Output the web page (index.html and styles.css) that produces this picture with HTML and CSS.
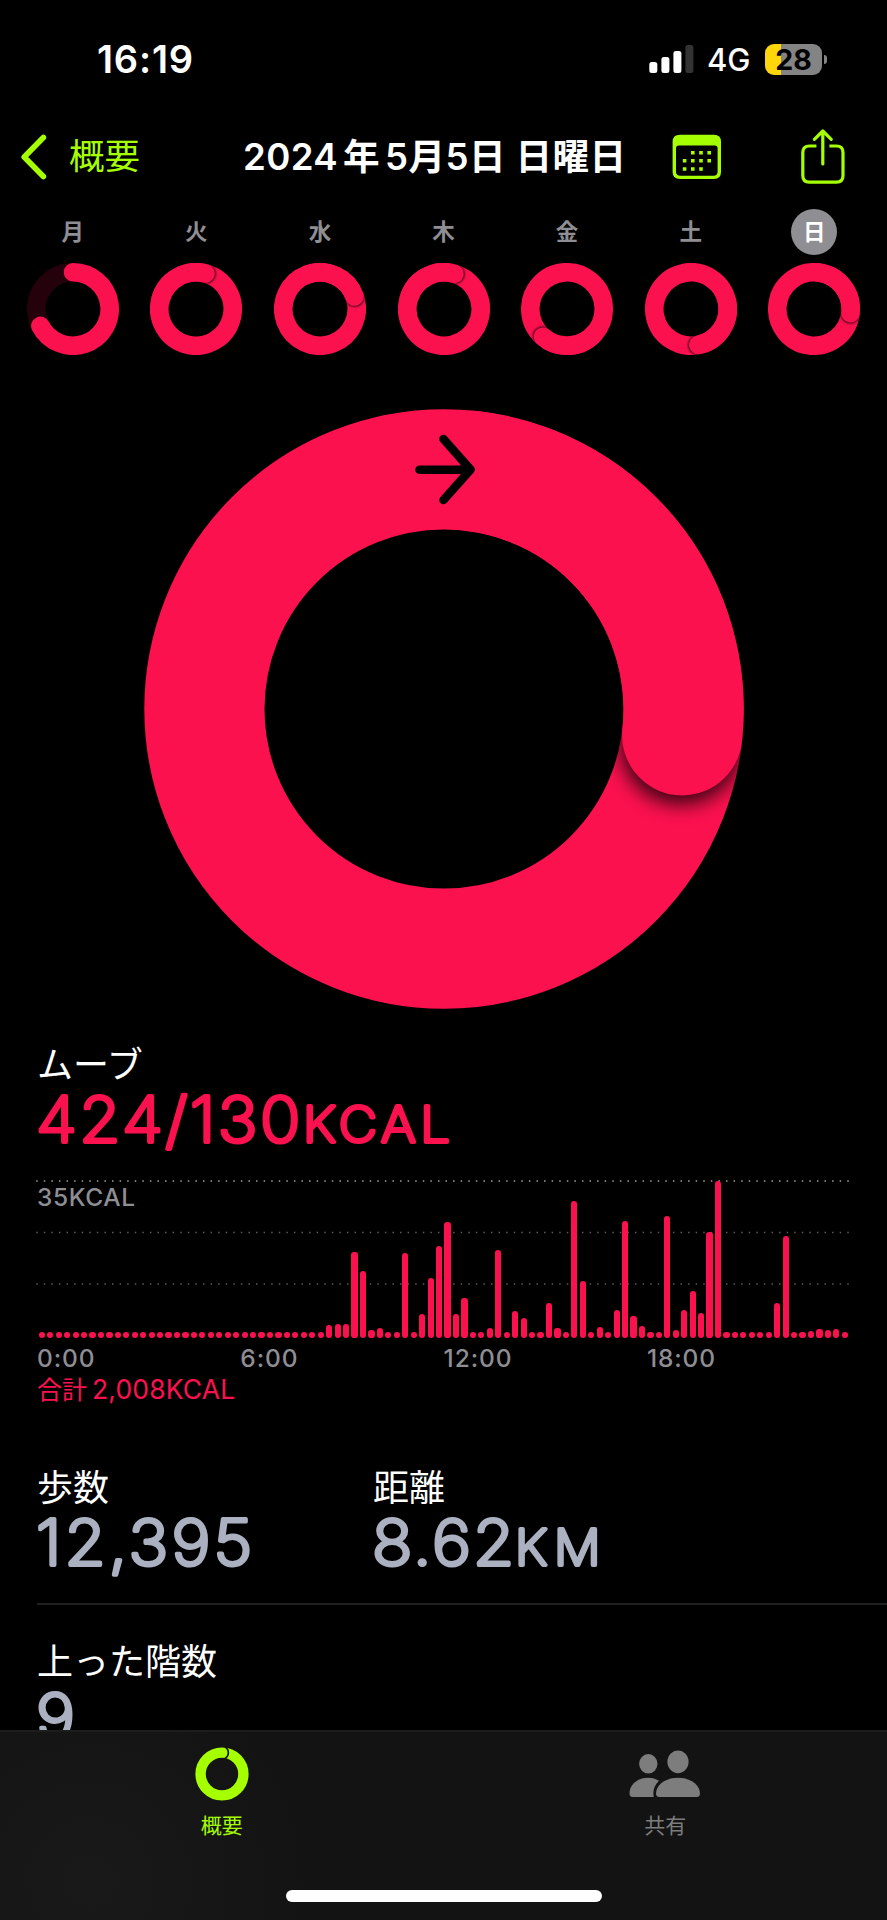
FILE: index.html
```html
<!DOCTYPE html>
<html lang="ja">
<head>
  <meta charset="UTF-8">
  <title>概要</title>
  <link rel="stylesheet" href="styles.css">
</head>
<body>
  <!-- shared shapes -->
  <svg class="defs" width="0" height="0">
    <defs>
      <clipPath id="ring-clip">
        <path clip-rule="evenodd" d="M0 -46A46 46 0 1 1 0 46A46 46 0 1 1 0 -46ZM0 -27.4A27.4 27.4 0 1 1 0 27.4A27.4 27.4 0 1 1 0 -27.4Z"/>
      </clipPath>
      <clipPath id="big-clip">
        <path clip-rule="evenodd" d="M0 -299.7A299.7 299.7 0 1 1 0 299.7A299.7 299.7 0 1 1 0 -299.7ZM0 -179.5A179.5 179.5 0 1 1 0 179.5A179.5 179.5 0 1 1 0 -179.5Z"/>
      </clipPath>
      <filter id="soft" x="-50%" y="-50%" width="200%" height="200%"><feGaussianBlur stdDeviation="0.9"/></filter>
      <filter id="big-soft" x="-50%" y="-50%" width="200%" height="200%"><feGaussianBlur stdDeviation="10"/></filter>
      <g id="lap">
        <circle class="move" r="36.7"/>
        <g clip-path="url(#ring-clip)"><circle class="shadow" cx="0.6" cy="-36.7" r="9.7" filter="url(#soft)"/></g>
        <path class="move" d="M-36.7 0A36.7 36.7 0 0 1 0 -36.7"/>
      </g>
    </defs>
  </svg>

  <div class="screen">
    <header class="status-bar">
      <span class="time">16:19</span>
      <div class="status-icons">
        <svg class="signal" width="45" height="28" viewBox="0 0 45 28" fill="#fff">
          <rect x="0.3" y="17" width="8" height="11" rx="2.5"/>
          <rect x="12.4" y="12" width="8" height="16" rx="2.5"/>
          <rect x="24.4" y="6" width="8" height="22" rx="2.5"/>
          <rect x="36.4" y="0" width="8" height="28" rx="2.5" fill="#333"/>
        </svg>
        <span class="network">4G</span>
        <div class="battery"><span>28</span></div>
      </div>
    </header>

    <nav class="nav">
      <svg width="28" height="48" viewBox="0 0 28 48" class="chevron"><path d="M23.4 4.5L4.2 24L23.4 43.5"/></svg>
      <span class="back">概要</span>
      <h1>2024<i>年</i>5月5日 日曜日</h1>
      <svg class="calendar" width="50" height="46" viewBox="0 0 50 46">
        <path fill-rule="evenodd" d="M8 0.7H42Q49 0.7 49 7.7V38Q49 45 42 45H8Q0.6 45 0.6 38V7.7Q0.6 0.7 8 0.7ZM6.8 11.6Q4 11.6 4 14.6V37.4Q4 41.8 8.4 41.8H41.4Q45.6 41.8 45.6 37.4V14.6Q45.6 11.6 42.8 11.6Z"/>
        <path d="M19 17h3.6v3.6H19zM27.2 17h3.6v3.6h-3.6zM35.4 17H39v3.6h-3.6zM10.8 25h3.6v3.6h-3.6zM19 25h3.6v3.6H19zM27.2 25h3.6v3.6h-3.6zM35.4 25H39v3.6h-3.6zM10.8 33.2h3.6v3.6h-3.6zM19 33.2h3.6v3.6H19zM27.2 33.2h3.6v3.6h-3.6z"/>
      </svg>
      <svg class="share" width="44" height="56" viewBox="0 0 44 56">
        <path d="M15.4 17H8.4Q1.8 17 1.8 23.6V46.6Q1.8 53.2 8.4 53.2H35.4Q42 53.2 42 46.6V23.6Q42 17 35.4 17H28.4"/>
        <path stroke-linecap="round" d="M21.8 35V2.6M13.4 10.4L21.8 2L30.2 10.4"/>
      </svg>
    </nav>

    <section class="week">
      <div class="day"><span>月</span>
        <svg viewBox="-46 -46 92 92"><circle class="track" r="36.7"/><path class="move" d="M0 -36.7A36.7 36.7 0 1 1 -32.6 16.9"/></svg></div>
      <div class="day"><span>火</span><svg viewBox="-46 -46 92 92"><use href="#lap" transform="rotate(15)"/></svg></div>
      <div class="day"><span>水</span><svg viewBox="-46 -46 92 92"><use href="#lap" transform="rotate(70)"/></svg></div>
      <div class="day"><span>木</span><svg viewBox="-46 -46 92 92"><use href="#lap" transform="rotate(16.5)"/></svg></div>
      <div class="day"><span>金</span><svg viewBox="-46 -46 92 92"><use href="#lap" transform="rotate(221)"/></svg></div>
      <div class="day"><span>土</span><svg viewBox="-46 -46 92 92"><use href="#lap" transform="rotate(168.5)"/></svg></div>
      <div class="day today"><span>日</span><svg viewBox="-46 -46 92 92"><use href="#lap" transform="rotate(96.5)"/></svg></div>
    </section>

    <svg class="big-ring" viewBox="-300 -300 600 600">
      <circle class="move" r="239.6"/>
      <g transform="rotate(96.3)">
        <g clip-path="url(#big-clip)"><circle class="shadow" cx="8" cy="-239.6" r="61" filter="url(#big-soft)"/></g>
        <path class="move" d="M-239.6 0A239.6 239.6 0 0 1 0 -239.6"/>
      </g>
      <path class="arrow" d="M-24.5 -239.3H26M-0.5 -270L26.5 -239.3L-0.5 -209"/>
    </svg>

    <section class="move-block">
      <h2>ムーブ</h2>
      <svg class="value red" width="500" height="80">
        <text transform="translate(-1 52) scale(1.07 1)" textLength="247">424/130</text>
        <text class="unit" transform="translate(266 52) scale(1.09 1)" textLength="135">KCAL</text>
      </svg>
      <div class="chart">
        <svg class="grid" width="814" height="160" viewBox="0 0 814 160">
          <path class="top" d="M0.2 1H813"/>
          <path d="M0.2 52.5H813M0.2 104H813"/>
        </svg>
        <span class="max">35KCAL</span>
        <div class="bars" id="bars"></div>
      </div>
      <div class="hours"><span>0:00</span><span>6:00</span><span>12:00</span><span>18:00</span></div>
      <p class="total">合計<b>2,008KCAL</b></p>
    </section>

    <section class="stats">
      <div class="stat">
        <h2>歩数</h2>
        <svg class="value" width="300" height="80"><text transform="translate(-1 52) scale(1.07 1)" textLength="202">12,395</text></svg>
      </div>
      <div class="stat">
        <h2>距離</h2>
        <svg class="value" width="300" height="80">
          <text transform="translate(-1 52) scale(1.07 1)" textLength="133">8.62</text>
          <text class="unit" transform="translate(142 52) scale(1.07 1)" textLength="80">KM</text>
        </svg>
      </div>
    </section>
    <section class="stats floors">
      <div class="stat">
        <h2>上った階数</h2>
        <svg class="value" width="300" height="80"><text transform="translate(-1 52) scale(1.07 1)">9</text></svg>
      </div>
    </section>

    <footer class="tab-bar">
      <div class="tabs">
        <div class="tab active">
          <svg width="54" height="54" viewBox="-27 -27 54 54">
            <circle r="21.4" fill="none" stroke="#a6ff00" stroke-width="10.4"/>
            <path d="M3 -27.5C7.500 -24 7.500 -18.500 3 -15.500" fill="none" stroke="#131313" stroke-width="1.6"/>
          </svg>
          <span>概要</span>
        </div>
        <div class="tab">
          <svg width="72" height="54" viewBox="0 0 72 54" fill="#7d7d7d">
            <ellipse cx="19.3" cy="16.8" rx="9.2" ry="9.7"/>
            <ellipse cx="49" cy="14.8" rx="10.6" ry="11.4"/>
            <path d="M4 50Q0.5 50 0.5 46.500C0.500 38 8 30.800 19 30.800Q25.500 30.800 30 33.800C25.500 38 23.400 44 24.800 50Z"/>
            <path d="M30.500 50Q27 50 27 46.500C27 38.500 35.500 30.800 49 30.800C62.500 30.800 71 38.500 71 46.500Q71 50 67.500 50Z"/>
          </svg>
          <span>共有</span>
        </div>
      </div>
      <div class="home-indicator"></div>
    </footer>
  </div>

  <script>
    // 15分ごとのバーの高さ (px)。指定のない時間帯は最小値
    const bars = {
      34: 12.7, 35: 14.3, 36: 14, 37: 86, 38: 67.3, 39: 7.7, 40: 9.7,
      43: 85, 45: 24, 46: 60.3, 47: 91.7, 48: 116, 49: 24, 50: 40.3,
      53: 9.7, 54: 88.3, 56: 26.7, 57: 20.3, 60: 34.7, 61: 10, 63: 137.3,
      64: 57.3, 66: 11.3, 68: 28, 69: 117.3, 70: 22.3, 71: 11.7, 74: 121.7,
      75: 7.7, 76: 28, 77: 47.3, 78: 25.3, 79: 106, 80: 157, 87: 35.3,
      88: 101.7, 91: 6.6, 92: 9, 93: 8.3, 94: 9
    };
    const box = document.getElementById("bars");
    for (let i = 0; i < 96; i++) {
      const bar = document.createElement("i");
      bar.style.height = (bars[i] || 6.2) + "px";
      box.appendChild(bar);
    }
  </script>
</body>
</html>
```
FILE: styles.css
```css
* {
  box-sizing: border-box;
}

body {
  margin: 0;
  background: #000;
  color: #fff;
  font-family: Inter, "Noto Sans CJK JP", sans-serif;
}

h1, h2, p {
  margin: 0;
}

svg {
  display: block;
  flex: none;
}

.defs {
  position: absolute;
}

.screen {
  width: 887px;
  height: 1920px;
  overflow: hidden;
  display: flex;
  flex-direction: column;
}

/* status bar */
.status-bar {
  height: 115px;
  flex: none;
  display: flex;
  justify-content: space-between;
  padding: 36px 60px 0 97px;
}

.time {
  font-size: 38px;
  line-height: 46px;
  font-weight: 600;
  letter-spacing: 0.8px;
}

.status-icons {
  display: flex;
  height: 46px;
  align-items: center;
}

.network {
  width: 58px;
  padding-left: 13px;
  margin-right: 13px;
  font-size: 31px;
  font-weight: 500;
}

.battery {
  width: 57px;
  height: 31px;
  margin-right: 5px;
  border-radius: 9px;
  background: linear-gradient(90deg, #ffd60a 16px, #848484 16px);
  color: #000;
  font-size: 28.5px;
  line-height: 31px;
  font-weight: 700;
  text-align: center;
  position: relative;
}

.battery::after {
  content: "";
  position: absolute;
  right: -5px;
  top: 11px;
  width: 3px;
  height: 9px;
  border-radius: 0 4px 4px 0;
  background: #848484;
}

/* navigation */
.nav {
  height: 84px;
  flex: none;
  display: flex;
  align-items: center;
  padding-left: 20px;
  color: #a6ff00;
}

.chevron path {
  fill: none;
  stroke: #a6ff00;
  stroke-width: 5.6;
  stroke-linecap: round;
  stroke-linejoin: round;
}

.back {
  width: 174px;
  margin-left: 21px;
  font-size: 35.5px;
  line-height: 50px;
}

.nav h1 {
  width: 429px;
  color: #fff;
  font-size: 36.6px;
  line-height: 50px;
  font-weight: 600;
  letter-spacing: 0.4px;
  white-space: nowrap;
}

.nav h1 i {
  font-style: normal;
  margin: 0 5px;
}

.calendar {
  fill: #a6ff00;
}

.share {
  margin-left: 79px;
}

.share path {
  fill: none;
  stroke: #a6ff00;
  stroke-width: 3.2;
  stroke-linejoin: round;
}

/* week */
.week {
  display: flex;
  flex: none;
  padding: 10px 11px 0;
}

.day {
  flex: 1;
  display: flex;
  flex-direction: column;
  align-items: center;
  gap: 8px;
  color: #8e8e93;
  font-size: 22.5px;
  font-weight: 600;
}

.day span {
  width: 46px;
  height: 46px;
  line-height: 46px;
  text-align: center;
  border-radius: 50%;
}

.day svg {
  width: 92px;
  height: 92px;
}

.today span {
  background: #8e8e93;
  color: #fff;
  font-weight: 700;
}

.move, .track {
  fill: none;
  stroke: #fc114f;
  stroke-width: 18.6;
  stroke-linecap: round;
}

.track {
  stroke: #24010b;
}

.shadow {
  fill: #000;
  opacity: 0.8;
}

.big-ring {
  width: 600px;
  height: 600px;
  margin: 54px auto 0;
}

.big-ring .move {
  stroke-width: 120.2;
}

.arrow {
  fill: none;
  stroke: #000;
  stroke-width: 8.6;
  stroke-linecap: round;
  stroke-linejoin: round;
}

/* move */
.move-block {
  flex: none;
  padding: 31px 0 0 37px;
}

h2 {
  font-size: 36px;
  line-height: 50px;
  font-weight: 400;
}

/* thin glyphs with a round stroke give the rounded numerals */
.value {
  overflow: visible;
}

.value text {
  fill: #abb1c0;
  stroke: #abb1c0;
  font-size: 62.5px;
  font-weight: 200;
  stroke-width: 3.8;
  stroke-linejoin: round;
}

.value .unit {
  font-size: 48.5px;
}

.value.red text {
  fill: #fc114f;
  stroke: #fc114f;
}

.chart {
  position: relative;
  height: 158px;
  margin-top: 10px;
  padding-top: 5px;
}

.grid {
  position: absolute;
  left: -1px;
  top: 0;
}

.grid path {
  stroke: #5a5a5e;
  stroke-width: 1.5;
  stroke-dasharray: 1.5 6.08;
}

.grid .top {
  stroke: #a0a0a4;
}

.max, .hours {
  color: #8e8e93;
  font-size: 24.5px;
  line-height: 24px;
  font-weight: 500;
  letter-spacing: 0.9px;
}

.max {
  display: block;
  letter-spacing: 0.6px;
}

.bars {
  position: absolute;
  left: 1.7px;
  bottom: 0;
  width: 810px;
  display: flex;
  align-items: flex-end;
  justify-content: space-between;
}

.bars i {
  width: 6.2px;
  border-radius: 3.1px;
  background: #fc114f;
}

.hours {
  display: flex;
  padding-top: 8px;
}

.hours span {
  width: 203.3px;
}

.total {
  height: 37px;
  color: #fc114f;
  font-size: 25px;
  line-height: 38px;
  white-space: nowrap;
}

.total b {
  margin-left: 5px;
  font-size: 26.5px;
  font-weight: 400;
  letter-spacing: 0.15px;
}

/* stats */
.stats {
  flex: none;
  display: flex;
  height: 198px;
  margin-left: 37px;
  padding-top: 56px;
  border-bottom: 2px solid #202021;
}

.stat {
  width: 336px;
}

.floors {
  height: 125px;
  padding-top: 32px;
  border: 0;
  overflow: hidden;
}

/* tab bar */
.tab-bar {
  flex: none;
  height: 190px;
  border-top: 2px solid #1d1d1d;
  background: radial-gradient(circle at 90px 150px, #191919, #131313 220px);
}

.tabs {
  display: flex;
  height: 158px;
}

.tab {
  flex: 1;
  display: flex;
  flex-direction: column;
  align-items: center;
  padding-top: 15px;
  color: #7d7d7d;
  font-size: 21px;
  line-height: 30px;
}

.tab span {
  margin-top: 10px;
}

.active {
  color: #a6ff00;
}

.home-indicator {
  width: 316px;
  height: 12px;
  margin: 0 auto;
  border-radius: 6px;
  background: #fff;
}
```
